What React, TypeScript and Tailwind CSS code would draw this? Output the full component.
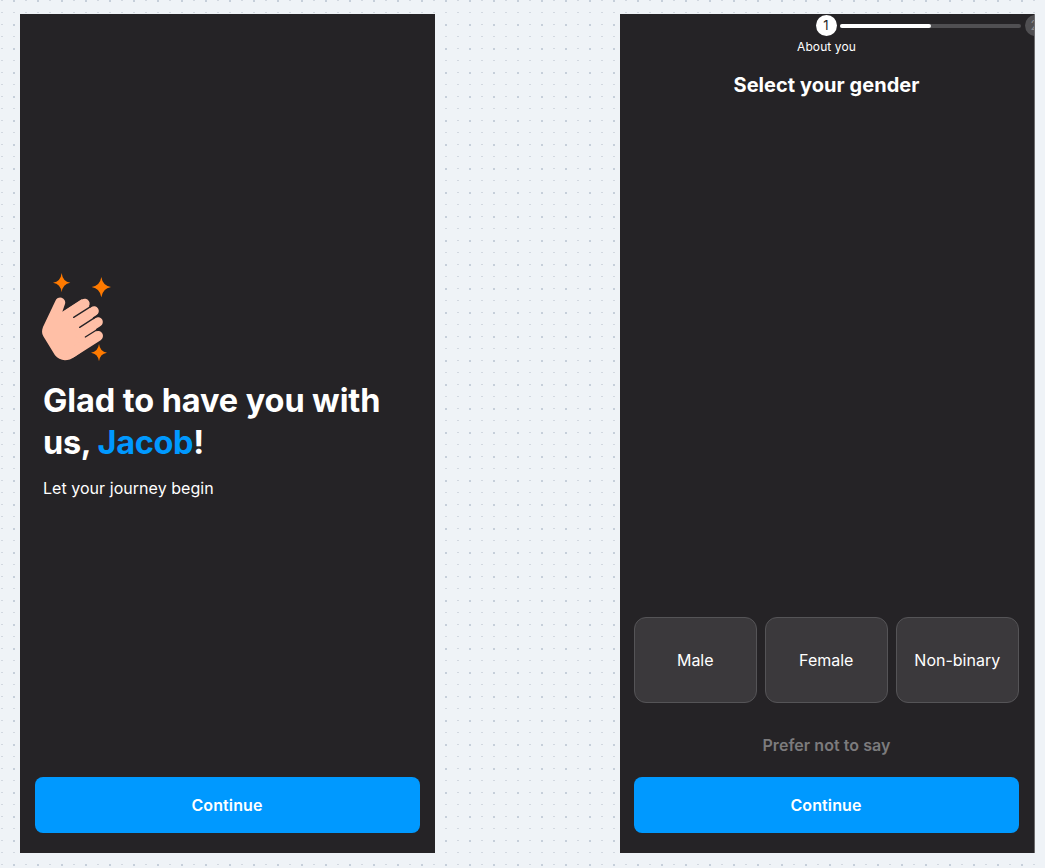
import React from "react";

const GENDERS = ["Male", "Female", "Non-binary"];

const ContinueButton = () => {
  return (
    <button className="h-14 w-[385px] shrink-0 rounded-lg bg-[#0099ff] pr-px text-base font-semibold tracking-[0.1px] text-white">
      Continue
    </button>
  );
};

const ClapIcon = () => {
  return (
    <svg viewBox="36 24 207 264" className="h-[88px] w-[69px]" fill="none">
      <g fill="#ffbfa6" stroke="#ffbfa6" strokeLinecap="round">
        <path
          stroke="none"
          d="M76 108A15 15 0 0 1 105 117L97 140L155 103L180 127L206 224L134 275C113 291 88 288 75 271L40 214C35 205 35 197 39 186Z"
        />
        <path strokeWidth="30" d="M164 116L112 150" />
        <path strokeWidth="29" d="M192 138L130 178" />
        <path strokeWidth="29" d="M204 171L150 206" />
        <path strokeWidth="30" d="M204 213L125 263" />
      </g>
      <g stroke="#252326" strokeWidth="4" strokeLinecap="round">
        <path d="M131 157L183 124" />
        <path d="M149 187L208 149" />
        <path d="M166 216L214 186" />
      </g>
      <g fill="#ff7a00">
        <path d="M95 24Q98 50 121 53Q98 56 95 82Q92 56 69 53Q92 50 95 24Z" />
        <path d="M214 36Q218 62 243 66Q218 70 214 97Q210 70 185 66Q210 62 214 36Z" />
        <path d="M207 237Q210 260 231 263Q210 266 207 289Q204 266 183 263Q204 260 207 237Z" />
      </g>
    </svg>
  );
};

const WelcomeScreen = () => {
  return (
    <section className="flex h-[839px] w-[415px] flex-col bg-[#252326] px-[15px] pt-[259px] pb-5">
      <div className="flex-1 pl-[7px]">
        <ClapIcon />
        <h1 className="mt-[19px] pl-px text-[32.5px] leading-[42px] font-bold tracking-[-0.1px]">
          Glad to have you with
          <br />
          <span className="tracking-[-0.35px]">
            us, <span className="text-[#0099ff]">Jacob</span>!
          </span>
        </h1>
        <p className="mt-3 pl-px text-base leading-6 tracking-[0.04px]">
          Let your journey begin
        </p>
      </div>
      <ContinueButton />
    </section>
  );
};

const GenderScreen = () => {
  return (
    <section className="flex h-[839px] w-[415px] flex-col overflow-hidden border-r border-[#6c6b6e] bg-[#252326] pr-[15px] pb-5 pl-[14px]">
      <div className="mt-px -mr-[15px] flex h-[21px] items-center overflow-hidden pl-[182px]">
        <div className="flex size-[21px] shrink-0 items-center justify-center rounded-full bg-white pr-px text-[13px] text-[#252326]">
          1
        </div>
        <div className="mr-1 ml-[3px] h-1 w-[181px] shrink-0 rounded-full bg-[#504f52]">
          <div className="h-1 w-[91px] rounded-full bg-white" />
        </div>
        <div className="flex size-[21px] shrink-0 items-center justify-center rounded-full bg-[#504f52] pr-0.5 text-[13px] text-[#8a898c]">
          2
        </div>
      </div>
      <p className="mt-[3px] text-center text-xs leading-4 tracking-[0.1px]">
        About you
      </p>
      <h2 className="mt-4 text-center text-xl leading-7 font-bold tracking-[0.05px]">
        Select your gender
      </h2>
      <div className="mt-auto -ml-[0.5px] flex h-[86px] w-[385.5px] shrink-0 gap-[7.5px]">
        {GENDERS.map((gender) => (
          <button
            key={gender}
            className="flex-1 rounded-xl border border-[#555457] bg-[#3b393c] text-base whitespace-nowrap"
          >
            {gender}
          </button>
        ))}
      </div>
      <button className="mt-[30px] mb-5 h-6 text-base leading-6 font-semibold tracking-[0.06px] text-[#7c7b7d]">
        Prefer not to say
      </button>
      <ContinueButton />
    </section>
  );
};

export default function App() {
  return (
    <main className="flex h-[868px] w-[1045px] gap-[185px] overflow-hidden bg-[#eff3f7] bg-[conic-gradient(at_2px_2px,transparent_75%,#c6cfda_0),conic-gradient(at_2px_1px,transparent_75%,#d2d8e0_0)] bg-[size:24px_24px,12px_12px] bg-[position:13px_0px,1px_0px] pt-[14px] pl-5 font-['Inter',sans-serif] text-white">
      <WelcomeScreen />
      <GenderScreen />
    </main>
  );
}
